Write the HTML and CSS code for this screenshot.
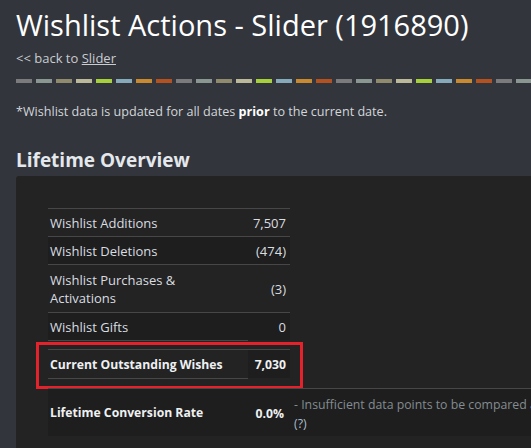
FILE: index.html
```html
<!DOCTYPE html>
<html>
<head>
<meta charset="utf-8">
<link rel="stylesheet" href="styles.css">
</head>
<body>
<div class="page">
  <h1 class="title">Wishlist Actions - Slider (1916890)</h1>
  <div class="back">&lt;&lt; back to <a href="#">Slider</a></div>
  <div class="dashes"></div>
  <p class="note">*Wishlist data is updated for all dates <b>prior</b> to the current date.</p>
  <h2 class="section">Lifetime Overview</h2>
  <div class="panel">
    <div class="stats">
      <div class="row odd"><span class="label">Wishlist Additions</span><span class="value">7,507</span></div>
      <div class="row even"><span class="label">Wishlist Deletions</span><span class="value">(474)</span></div>
      <div class="row odd tall"><span class="label">Wishlist Purchases &amp;<br>Activations</span><span class="value">(3)</span></div>
      <div class="row even short-border"><span class="label">Wishlist Gifts</span><span class="value">0</span></div>
      <div class="spacer"></div>
      <div class="row total short-border highlight">
        <span class="label"><b>Current Outstanding Wishes</b></span><span class="value"><b>7,030</b></span>
        <div class="annot"></div>
      </div>
      <div class="spacer wide"></div>
      <div class="row conv">
        <span class="label"><b>Lifetime Conversion Rate</b></span><span class="value"><b>0.0%</b></span>
        <span class="remark">- Insufficient data points to be compared against other titles.<span class="help">(?)</span></span>
      </div>
    </div>
  </div>
</div>
</body>
</html>
```
FILE: styles.css
```css
html, body {
  margin: 0;
  padding: 0;
  background: #32353c;
  overflow: hidden;
}
.page {
  width: 760px;
  padding: 0 0 0 16px;
  font-family: "Open Sans", "DejaVu Sans", sans-serif;
  color: #d3d6d9;
  font-size: 13px;
}
.title {
  margin: 0;
  padding-top: 6px;
  font-size: 29px;
  font-weight: 400;
  line-height: 38px;
  color: #ffffff;
}
.back {
  margin-top: 5px;
  line-height: 18px;
  color: #c9ccd0;
}
.back a {
  color: #c9ccd0;
  text-decoration: underline;
}
.dashes {
  margin-top: 12px;
  height: 4px;
  width: 520px;
  background: repeating-linear-gradient(90deg,
    #7b7b7b 0 16px, transparent 16px 20px,
    #8a9690 20px 36px, transparent 36px 40px,
    #8f8b6c 40px 56px, transparent 56px 60px,
    #bcb89a 60px 76px, transparent 76px 80px,
    #a6d13b 80px 96px, transparent 96px 100px,
    #87aabb 100px 116px, transparent 116px 120px,
    #c98a2f 120px 136px, transparent 136px 140px,
    #b5501f 140px 156px, transparent 156px 160px);
}
.note {
  margin: 20px 0 0 0;
  font-size: 12.6px;
  line-height: 18px;
  color: #d3d6d9;
}
.note b { color: #ffffff; }
.section {
  margin: 26px 0 0 0;
  font-size: 19px;
  font-weight: 700;
  line-height: 26px;
  color: #e4e8ec;
}
.panel {
  margin-top: 3px;
  background: #232323;
  border-radius: 3px 0 0 0;
  padding: 32px 0 12px 32px;
  min-height: 240px;
}
.stats {
  display: flex;
  flex-direction: column;
}
.row {
  display: flex;
  width: 242px;
  border-top: 1px solid #474747;
  align-items: center;
  position: relative;
  min-height: 28px;
  box-sizing: border-box;
}
.row.odd { background: #232323; }
.row.even { background: #1e1e1e; }
.row.tall { min-height: 48px; }
.row .label {
  flex: 1;
  padding-left: 2px;
  line-height: 18px;
  color: #d9dde0;
}
.row .value {
  padding-right: 4px;
  text-align: right;
  color: #d9dde0;
}
.row b { color: #eef0f2; font-weight: 700; font-size: 12.2px; }
.row.short-border::after {
  content: "";
  position: absolute;
  left: 0;
  bottom: -1px;
  width: 200px;
  height: 1px;
  background: #474747;
}
.spacer { height: 9px; }
.spacer.wide { height: 10px; }
.row.total {
  min-height: 29px;
  background: linear-gradient(90deg, #232323 0 200px, #1e1e1e 200px);
}
.annot {
  position: absolute;
  left: -12px;
  top: -8px;
  width: 267px;
  height: 47px;
  border: 3px solid #e3222b;
  box-sizing: border-box;
}
.row.conv {
  width: auto;
  min-height: 48px;
  background: #1e1e1e;
  align-items: center;
}
.row.conv .label {
  flex: none;
  width: 194px;
}
.row.conv .value {
  width: 40px;
  padding-right: 4px;
}
.remark {
  width: 420px;
  padding-left: 6px;
  padding-top: 2px;
  font-size: 12.3px;
  line-height: 19px;
  color: #838c91;
}
.help {
  display: block;
  color: #aabccb;
}
```
